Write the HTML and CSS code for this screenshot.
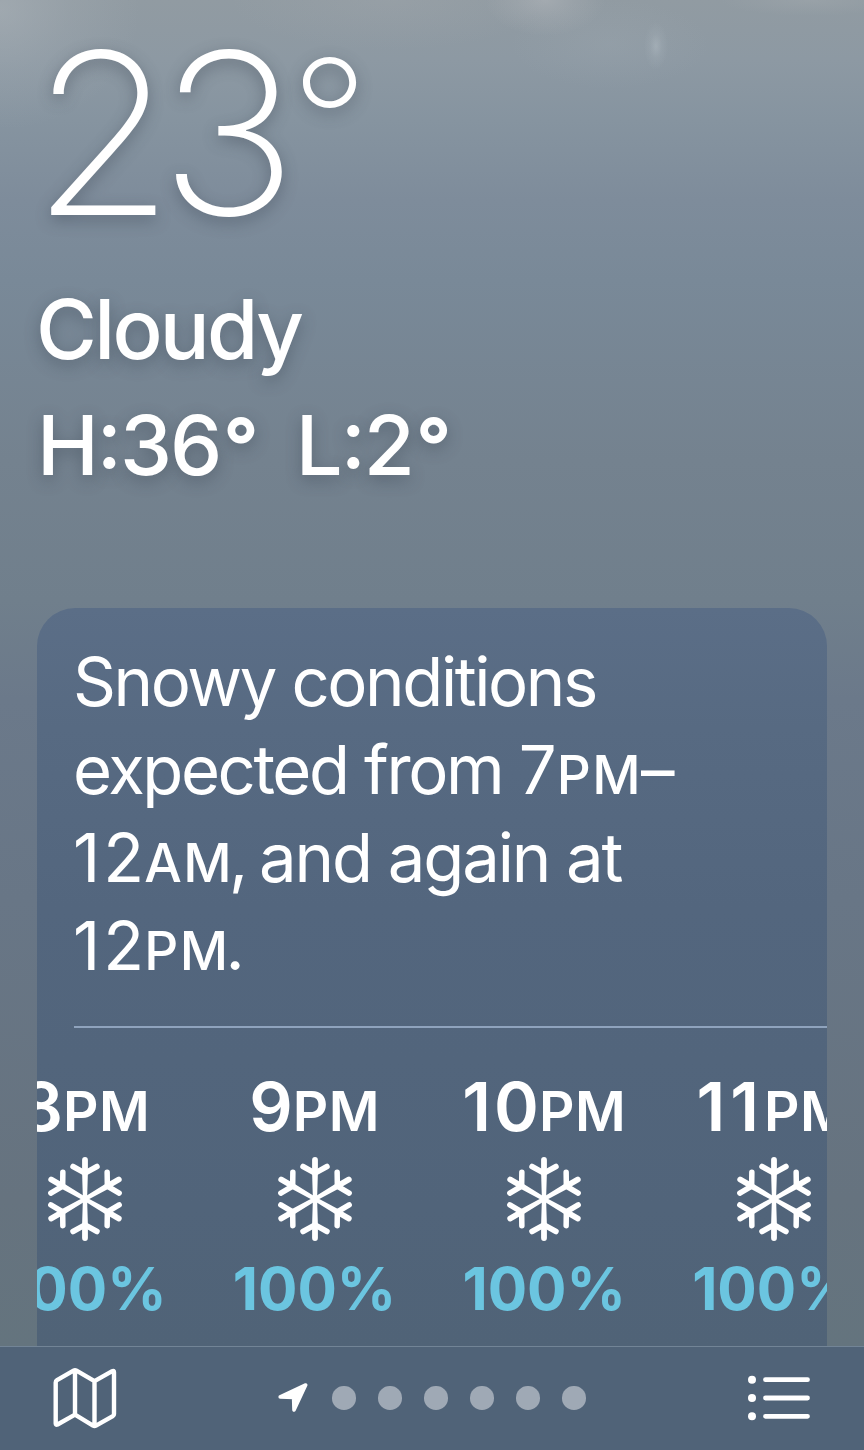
FILE: index.html
```html
<!DOCTYPE html>
<html lang="en">
<head>
    <meta charset="UTF-8">
    <meta name="viewport" content="width=device-width, initial-scale=1.0">
    <title>Weather</title>
    <link rel="stylesheet" href="styles.css">
</head>
<body>
<!-- Shared snow icon -->
<svg class="defs" aria-hidden="true">
    <symbol id="snow" viewBox="-42 -42 84 84">
        <g id="arm">
            <path d="M-2.1 0 L-2.9 -26 V-39 A2.9 2.9 0 0 1 2.9 -39 V-26 L2.1 0 Z" fill="#fff"/>
            <path d="M-12 -32.5 L0 -25.8 L12 -32.5" fill="none" stroke="#fff" stroke-width="5.5" stroke-linecap="round"/>
        </g>
        <use href="#arm" transform="rotate(60)"/>
        <use href="#arm" transform="rotate(120)"/>
        <use href="#arm" transform="rotate(180)"/>
        <use href="#arm" transform="rotate(240)"/>
        <use href="#arm" transform="rotate(300)"/>
    </symbol>
</svg>

<div class="screen">
    <header class="current">
        <h1>23<span class="degree">°</span></h1>
        <p class="condition">Cloudy</p>
        <p class="range"><span class="high">H<span class="colon">:</span>36<span class="deg">°</span></span><span class="low">L<span class="colon">:</span>2<span class="deg">°</span></span></p>
    </header>

    <section class="card">
        <p class="summary">
            <span class="line">Snowy conditions</span>
            <span class="line">expected from <span class="clock">7<small>PM</small></span><span class="dash">–</span></span>
            <span class="line loose"><span class="clock">12<small>AM</small></span><span class="comma">,</span> and again at</span>
            <span class="line"><span class="clock">12<small>PM</small></span>.</span>
        </p>
        <div class="hours">
            <div class="hour">
                <span class="time">8<small>PM</small></span>
                <svg class="snow"><use href="#snow"/></svg>
                <span class="chance">100%</span>
            </div>
            <div class="hour">
                <span class="time">9<small>PM</small></span>
                <svg class="snow"><use href="#snow"/></svg>
                <span class="chance">100%</span>
            </div>
            <div class="hour">
                <span class="time">10<small>PM</small></span>
                <svg class="snow"><use href="#snow"/></svg>
                <span class="chance">100%</span>
            </div>
            <div class="hour">
                <span class="time ones">11<small>PM</small></span>
                <svg class="snow"><use href="#snow"/></svg>
                <span class="chance">100%</span>
            </div>
        </div>
    </section>

    <footer class="toolbar">
        <svg class="map" viewBox="0 0 64 62">
            <path d="M2.7 15.5 Q2.7 14 4 13.2 L20.5 3.7 Q22 2.8 23.5 3.7 L41.5 14.2 L59.2 4.2 Q61 3.3 61 5.2 V47 Q61 48.5 59.8 49.2 L43 58.6 Q41.5 59.4 40 58.6 L22 47.7 L4.5 57.5 Q2.7 58.3 2.7 56.4 Z M22 3.5 V47.7 M41.5 14.2 V59"/>
        </svg>
        <div class="pages">
            <svg class="arrow" viewBox="1.8 0 30 30">
                <path d="M2 14 L27.5 2 L15.8 27 L15.4 14.5 Z"/>
            </svg>
            <i></i><i></i><i></i><i></i><i></i><i></i>
        </div>
        <svg class="list" viewBox="0 0 62 46">
            <circle cx="4" cy="4.7" r="4"/>
            <circle cx="4" cy="23" r="4"/>
            <circle cx="4" cy="41.3" r="4"/>
            <path d="M17.5 4.7 H59.5 M17.5 23 H59.5 M17.5 41.3 H59.5"/>
        </svg>
    </footer>
</div>
</body>
</html>
```

FILE: styles.css
```css
* {
    box-sizing: border-box;
}
body {
    margin: 0;
    font-family: Inter, "Liberation Sans", sans-serif;
    color: #fff;
}
h1, p {
    margin: 0;
}
.defs {
    display: none;
}
.screen {
    width: 864px;
    height: 1450px;
    overflow: hidden;
    display: flex;
    flex-direction: column;
    background:
        radial-gradient(ellipse 60px 36px at 545px 0, rgba(190, 192, 196, 0.4), rgba(190, 192, 196, 0.18) 50%, transparent),
        radial-gradient(ellipse 12px 24px at 656px 46px, rgba(190, 200, 207, 0.38), rgba(190, 200, 207, 0.12) 50%, transparent),
        radial-gradient(ellipse 100px 45px at 610px 44px, rgba(170, 180, 187, 0.16), transparent),
        radial-gradient(ellipse 140px 120px at 0 10px, rgba(180, 187, 193, 0.42), rgba(180, 187, 193, 0.16) 50%, transparent),
        radial-gradient(ellipse 160px 50px at 390px 0, rgba(170, 174, 178, 0.22), transparent),
        radial-gradient(ellipse 90px 16px at 810px 0, rgba(170, 176, 180, 0.3), transparent),
        linear-gradient(#919ba2 0, #8d99a3 60px, #8694a0 120px, #7e8c9b 200px, #798998 280px, #74828f 460px, #707f8c 600px, #6b798a 700px, #687686 900px, #66737f 1200px, #64747e 1346px);
}

/* Current conditions */
.current {
    height: 608px;
    padding: 21px 37px 0;
    text-shadow: 0 5px 16px rgba(50, 60, 75, 0.42);
    flex: none;
}
h1 {
    margin-left: -6px;
    font-size: 225px;
    line-height: 224px;
    font-weight: 200;
    letter-spacing: -15px;
    transform: scaleX(1.035);
    transform-origin: left;
}
.degree {
    margin-left: 8px;
    font-size: 167px;
    font-weight: 250;
    line-height: 0;
    vertical-align: 35px;
}
.condition,
.range {
    font-size: 83px;
    line-height: 116px;
    font-weight: 550;
}
.condition {
    margin: 26px 0 0 -1px;
    letter-spacing: -2.7px;
}
.range {
    display: flex;
    gap: 39px;
    letter-spacing: -2px;
}
.colon {
    line-height: 0;
    vertical-align: 7px;
}
.deg {
    margin-left: 3px;
    font-size: 77px;
    font-weight: 650;
    line-height: 0;
    vertical-align: 2px;
}

/* Forecast card */
.card {
    flex: 1;
    margin: 0 37px;
    padding-top: 30px;
    overflow: hidden;
    border-radius: 38px 38px 0 0;
    background: linear-gradient(#5b6e87, #576a82 120px, #53667e 300px, #51647a 600px, #506377);
}
.summary {
    margin-left: 37px;
    padding-bottom: 36px;
    border-bottom: 2px solid #8fa3bd;
    font-size: 67px;
    line-height: 88px;
}
.line {
    display: block;
    height: 88px;
    margin-left: -1px;
    white-space: nowrap;
    letter-spacing: -2.4px;
}
.loose {
    letter-spacing: -2.1px;
}
.clock {
    letter-spacing: 3px;
}
.summary small {
    margin: 0 -4px 0 -3px;
    font-size: 53px;
    font-weight: 450;
    letter-spacing: 1.5px;
}
.dash {
    margin-left: 3px;
}
.comma {
    margin-right: -4px;
}
.hours {
    display: flex;
    margin: 38px 0 0 -67px;
}
.hour {
    flex: none;
    width: 229.7px;
    display: flex;
    flex-direction: column;
    align-items: center;
    font-weight: 600;
}
.time {
    font-size: 68px;
    line-height: 80px;
    height: 80px;
    letter-spacing: 3px;
}
.time small {
    margin-left: -3px;
    font-size: 55px;
    letter-spacing: 0.5px;
}
.ones {
    letter-spacing: 5px;
}
.ones small {
    margin-left: 0;
}
.snow {
    width: 84px;
    height: 84px;
    margin: 11px 0 13px;
}
.chance {
    font-size: 58.5px;
    line-height: 70px;
    font-weight: 700;
    color: #6bc5e0;
}

/* Bottom bar */
.toolbar {
    flex: none;
    height: 104px;
    padding: 0 54px 1px 53px;
    display: flex;
    justify-content: space-between;
    align-items: center;
    border-top: 1px solid #728496;
    background: #506378;
}
.map {
    width: 64px;
    height: 62px;
    fill: none;
    stroke: #fff;
    stroke-width: 4.4;
    stroke-linejoin: round;
}
.pages {
    display: flex;
    align-items: center;
    gap: 22.5px;
}
.pages i {
    width: 23.5px;
    height: 23.5px;
    border-radius: 50%;
    background: #9fa9b5;
}
.arrow {
    width: 30px;
    height: 30px;
    overflow: visible;
    fill: #fff;
    stroke: #fff;
    stroke-width: 3.6;
    stroke-linejoin: round;
}
.list {
    width: 62px;
    height: 46px;
    fill: #fff;
    stroke-linecap: round;
}
.list path {
    stroke: #fff;
    stroke-width: 4.8;
}
```
